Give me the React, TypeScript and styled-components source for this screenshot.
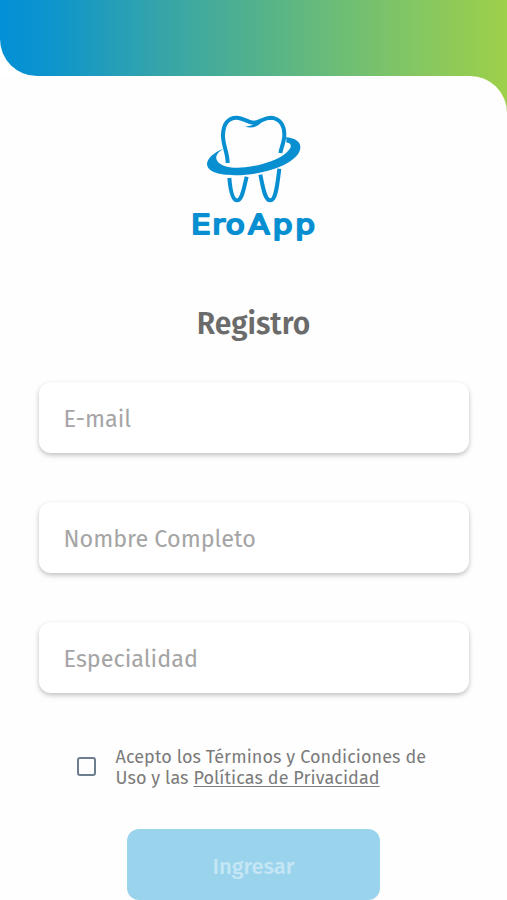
import React from "react";
import styled, { createGlobalStyle } from "styled-components";

const brandGradient = "linear-gradient(90deg, #0290d6 0%, #0a93cf 8%, #36a5a9 32%, #55b38a 52%, #7bc36a 76%, #9ed04a 100%)";

const GlobalStyle = createGlobalStyle`
  * { box-sizing: border-box; }
  body { margin: 0; background: #fff; font-family: "Fira Sans", "Noto Sans", sans-serif; }
`;

const Screen = styled.main`
  height: 900px;
  overflow: hidden;
  background: #fff;
`;

const Banner = styled.header`
  height: 75.5px;
  background: ${brandGradient};
  border-bottom-left-radius: 37px;
`;

const SheetBackdrop = styled.div`
  background: linear-gradient(90deg, #fff 50%, transparent 50%), ${brandGradient};
`;

const Sheet = styled.div`
  height: 825px;
  background: #fefefe;
  border-top-right-radius: 37px;
  display: flex;
  flex-direction: column;
  align-items: center;
  padding-top: 29.5px;
`;

const Logo = styled.svg`
  display: block;
  flex: none;
  width: 150px;
  height: 145px;
  margin-right: -3px;
`;

const Title = styled.h1`
  margin: 50px 0 0;
  height: 46px;
  line-height: 48px;
  font-size: 30px;
  font-weight: 600;
  color: #6b6b6b;
`;

const Form = styled.form`
  width: 430px;
  margin-top: 36px;
  display: flex;
  flex-direction: column;
  align-items: center;
`;

const Fields = styled.div`
  width: 100%;
  display: grid;
  gap: 49px;
`;

const Field = styled.input`
  width: 100%;
  height: 71px;
  padding: 3px 25px 0;
  border: 0;
  border-radius: 12px;
  outline: 0;
  background: #fff;
  box-shadow: 0 2px 4px rgba(0, 0, 0, 0.19), 0 3px 7px rgba(0, 0, 0, 0.07);
  font-family: inherit;
  font-size: 23.4px;
  color: #6b6b6b;
  &::placeholder { color: #a5a5a5; opacity: 1; }
`;

const Consent = styled.label`
  align-self: stretch;
  display: flex;
  align-items: center;
  gap: 20px;
  margin-top: 54px;
  padding-left: 38px;
`;

const Checkbox = styled.input`
  appearance: none;
  flex: none;
  width: 19px;
  height: 19px;
  margin: -3px 0 0;
  border: 2px solid #6d7d90;
  border-radius: 3px;
`;

const ConsentText = styled.span`
  font-size: 18px;
  line-height: 21px;
  letter-spacing: 0.08px;
  color: #7b7b7b;
  white-space: nowrap;
`;

const Line = styled.span`
  display: block;
`;

const PolicyLink = styled.a`
  text-decoration: underline;
  text-decoration-thickness: 1px;
  text-underline-offset: 2px;
`;

const Submit = styled.button`
  width: 253px;
  height: 71px;
  margin-top: 39.5px;
  padding: 5px 0 0;
  border: 0;
  border-radius: 12px;
  background: #9ad3ec;
  color: #c5e6f5;
  font-family: inherit;
  font-size: 22px;
  font-weight: 500;
`;

function ToothLogo() {
  return (
    <Logo viewBox="0 0 450 435" role="img" aria-label="EroApp">
      <g fill="none" stroke="#078fd2" strokeWidth="12">
        <path d="M143 174 C143 142 128 119 129 90 C130 57 145 37 171 38 C191 39 201 52 221 53 C241 53 250 38 272 38 C300 39 313 62 313 89 C313 110 304 127 301 144" />
        <path d="M148 219 C151 254 157 286 171 286 C187 286 192 246 200 215" />
        <path d="M241 209 C249 246 254 286 271 286 C288 286 292 239 298 191" />
      </g>
      <path fill="#078fd2" d="M194 64 C207 65 217 62 224 55 L250 43 C243 60 219 75 194 64Z" />
      <path fill="#078fd2" d="M130 131 C100 143 81 160 81 178 C83 205 133 215 199 209 C279 202 361 168 361 127 C361 108 343 99 317 97 C320 103 320 108 318 112 C332 114 336 121 329 132 C311 160 254 180 195 187 C149 192 113 181 109 161 C107 149 117 139 130 131Z" />
      <text
        transform="scale(1.15 1)"
        x="29 84 119.5 178 242 300.5"
        y="388"
        fill="#078fd2"
        stroke="#078fd2"
        strokeWidth="6"
        strokeLinejoin="round"
        fontFamily="DejaVu Sans, sans-serif"
        fontSize="81"
      >
        EroApp
      </text>
    </Logo>
  );
}

export default function App() {
  return (
    <Screen>
      <GlobalStyle />
      <Banner />
      <SheetBackdrop>
        <Sheet>
          <ToothLogo />
          <Title>Registro</Title>
          <Form>
            <Fields>
              <Field type="email" placeholder="E-mail" />
              <Field type="text" placeholder="Nombre Completo" />
              <Field type="text" placeholder="Especialidad" />
            </Fields>
            <Consent>
              <Checkbox type="checkbox" />
              <ConsentText>
                <Line>Acepto los Términos y Condiciones de</Line>
                <Line>Uso y las <PolicyLink>Políticas de Privacidad</PolicyLink></Line>
              </ConsentText>
            </Consent>
            <Submit type="submit" disabled>Ingresar</Submit>
          </Form>
        </Sheet>
      </SheetBackdrop>
    </Screen>
  );
}
